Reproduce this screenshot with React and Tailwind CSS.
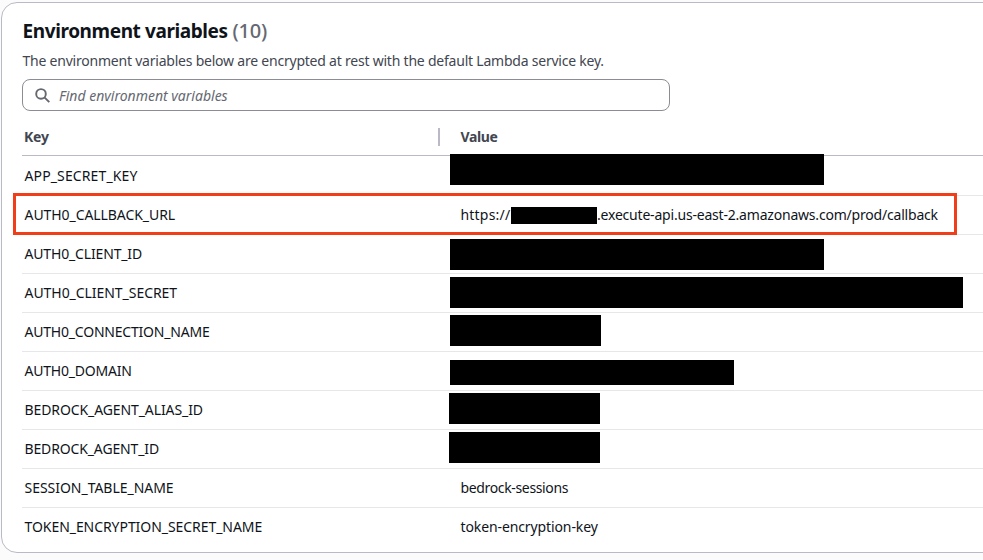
import React from "react";

const ROWS = [
  { name: "APP_SECRET_KEY", track: "tracking-[0.12px]", bar: "-left-[11px] -top-[2px] h-[31px] w-[374px]" },
  { name: "AUTH0_CALLBACK_URL", track: "tracking-[-0.07px]", url: true },
  { name: "AUTH0_CLIENT_ID", track: "tracking-[-0.16px]", bar: "-left-[11px] top-[4px] h-[31px] w-[374px]" },
  { name: "AUTH0_CLIENT_SECRET", track: "tracking-[-0.05px]", bar: "-left-[11px] top-[3px] h-[31px] w-[513px]" },
  { name: "AUTH0_CONNECTION_NAME", track: "tracking-[-0.21px]", bar: "-left-[11px] top-[2px] h-[31px] w-[151px]" },
  { name: "AUTH0_DOMAIN", track: "tracking-[-0.22px]", bar: "-left-[11px] top-[8px] h-[25px] w-[284px]" },
  { name: "BEDROCK_AGENT_ALIAS_ID", track: "tracking-[-0.1px]", bar: "-left-[12px] top-[2px] h-[31px] w-[151px]" },
  { name: "BEDROCK_AGENT_ID", track: "tracking-[-0.14px]", bar: "-left-[12px] top-[2px] h-[31px] w-[151px]" },
  { name: "SESSION_TABLE_NAME", track: "tracking-[-0.03px]", value: "bedrock-sessions", valueTrack: "tracking-[-0.35px]" },
  { name: "TOKEN_ENCRYPTION_SECRET_NAME", track: "tracking-[-0.06px]", value: "token-encryption-key", valueTrack: "tracking-[-0.11px]" },
];

function SearchIcon() {
  return (
    <svg className="ml-3 size-[15px] shrink-0" viewBox="0 0 15 15" fill="none" stroke="#656871" strokeWidth="1.9">
      <circle cx="6" cy="5.9" r="4.8" />
      <path d="m9.4 9.3 4.9 4.9" />
    </svg>
  );
}

function Row({ row, first, last }) {
  const height = first ? "h-[40px]" : "h-[39px]";
  const border = last ? "border-b border-transparent" : "border-b border-[#e6e7ea]";
  return (
    <div className={`relative flex items-center ${height} ${border}`}>
      <div className={`w-[439px] shrink-0 whitespace-nowrap pl-[2.5px] ${row.track}`}>{row.name}</div>
      <div className="relative flex flex-1 items-center self-stretch whitespace-nowrap">
        {row.bar && <div className={`absolute z-10 bg-black ${row.bar}`} />}
        {row.value && <span className={`-ml-[0.5px] ${row.valueTrack}`}>{row.value}</span>}
        {row.url && (
          <>
            <span className="-ml-[0.5px] w-[50.5px] tracking-[0.2px]">https://</span>
            <span className="mt-px h-[17px] w-[86px] bg-black" />
            <span className="tracking-[-0.2px]">.execute-api.us-east-2.amazonaws.com/prod/callback</span>
          </>
        )}
      </div>
      {row.url && <div className="absolute -left-[9px] -top-[3px] z-20 h-[42px] w-[944px] border-[3px] border-[#f03e1b]" />}
    </div>
  );
}

export default function App() {
  return (
    <div className="h-[560px] w-[983px] overflow-hidden bg-[#fbfbfb] pl-px pt-[2px] font-['Noto_Sans',sans-serif] text-sm text-[#0f141a]">
      <div className="h-[551px] w-[1010px] rounded-[16px] border border-[#b9bac5] bg-white pl-[20px]">
        <h2 className="mt-[15px] flex h-[26px] items-baseline whitespace-nowrap pl-[0.5px] text-[19px] leading-[26px]">
          <span className="w-[210px] font-bold tracking-[-0.4px]">Environment variables</span>
          <span className="text-[20px] font-medium tracking-[-0.2px] text-[#656871]">(10)</span>
        </h2>
        <p className="mt-[7px] h-5 pl-[0.5px] leading-5 tracking-[-0.22px] text-[#424650]">
          The environment variables below are encrypted at rest with the default Lambda service key.
        </p>
        <div className="mt-[8px] flex h-8 w-[648px] items-center rounded-lg border border-[#8c8c94]">
          <SearchIcon />
          <span className="ml-[9px] pt-[2px] italic text-[#656871]">Find environment variables</span>
        </div>
        <div className="mt-[7px] flex h-[38px] items-center border-b border-[#b9bac5] font-bold text-[#424650]">
          <div className="w-[416px] pl-[2px] tracking-[-0.2px]">Key</div>
          <div className="h-[18px] w-[2px] bg-[#b9bac5]" />
          <div className="ml-[20.5px] tracking-[-0.4px]">Value</div>
        </div>
        {ROWS.map((row, i) => (
          <Row key={row.name} row={row} first={i === 0} last={i === ROWS.length - 1} />
        ))}
      </div>
    </div>
  );
}
